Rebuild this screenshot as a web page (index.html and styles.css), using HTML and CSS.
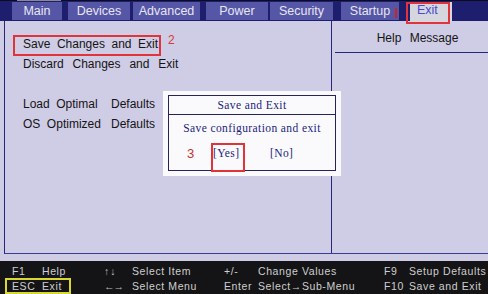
FILE: index.html
```html
<!DOCTYPE html>
<html>
<head>
<meta charset="utf-8">
<link rel="stylesheet" href="styles.css">
</head>
<body>
<div class="screen">
  <div class="topline"><span class="chip"></span></div>
  <nav class="tabs">
    <span class="tab t-main">Main</span>
    <span class="tab t-dev">Devices</span>
    <span class="tab t-adv">Advanced</span>
    <span class="tab t-pow">Power</span>
    <span class="tab t-sec">Security</span>
    <span class="tab t-start">Startup<i class="redmark"></i></span>
    <span class="tab t-exit active">Exit</span>
  </nav>
  <main class="body">
    <div class="frame">
      <section class="left">
        <div class="row">Save Changes and Exit</div>
        <div class="row wide">Discard Changes and Exit</div>
        <div class="row"></div>
        <div class="row"><span class="c1">Load Optimal</span><span>Defaults</span></div>
        <div class="row"><span class="c1">OS Optimized</span><span>Defaults</span></div>
      </section>
      <section class="right">
        <div class="help">Help Message</div>
      </section>
    </div>
  </main>
  <footer class="keys">
    <div class="kcol k1">
      <div><span class="k">F1</span><span>Help</span></div>
      <div><span class="k">ESC</span><span>Exit</span></div>
    </div>
    <div class="kcol k2">
      <div><span class="k arr">↑ ↓</span><span>Select Item</span></div>
      <div><span class="k arr">←→</span><span>Select Menu</span></div>
    </div>
    <div class="kcol k3">
      <div><span class="k">+/-</span><span>Change Values</span></div>
      <div><span class="k">Enter</span><span>Select→Sub-Menu</span></div>
    </div>
    <div class="kcol k4">
      <div><span class="k">F9</span><span>Setup Defaults</span></div>
      <div><span class="k">F10</span><span>Save and Exit</span></div>
    </div>
  </footer>

  <div class="dialog">
    <div class="dinner">
      <div class="dtitle">Save and Exit</div>
      <div class="dmsg">Save configuration and exit</div>
      <div class="dbtns"><span class="num3">3</span><span class="yes">[Yes]</span><span class="no">[No]</span></div>
    </div>
  </div>

  <div class="mark mark-save"></div>
  <span class="num num2">2</span>
  <div class="mark mark-exit"></div>
  <div class="mark-esc"></div>
</div>
</body>
</html>
```
FILE: styles.css
```css
* { box-sizing: border-box; margin: 0; padding: 0; }
html, body { width: 488px; height: 294px; overflow: hidden; }
body { font-family: "Liberation Sans", Arial, sans-serif; background: #cfcce6; }
.screen { position: relative; width: 488px; height: 294px; display: flex; flex-direction: column; }

.topline { height: 2px; background: #0c0c20; position: relative; }
.chip { position: absolute; left: 17px; top: 0; width: 44px; height: 1px; background: #8a8a90; }

.tabs { height: 20px; background: #1e1e6e; display: flex; align-items: flex-start; padding-left: 12px; }
.tab { height: 18px; margin-top: 1px; background: #5656a6; color: #e6e6f2; font-size: 12.5px; line-height: 18px; text-align: center; position: relative; }
.t-main { width: 50px; }
.t-dev { width: 62px; margin-left: 6px; }
.t-adv { width: 67px; margin-left: 3px; }
.t-pow { width: 62px; margin-left: 6px; }
.t-sec { width: 63px; margin-left: 2px; }
.t-start { width: 58px; margin-left: 8px; }
.t-exit { width: 42px; margin-left: 11px; }
.tab.active { background: #d6d6de; color: #4a4ad0; height: 20px; text-align: left; padding-left: 7px; line-height: 16px; }
.redmark { position: absolute; right: 2px; top: 6px; width: 2px; height: 10px; background: #d02020; }

.body { height: 240px; background: #cfcce6; padding: 0 0 7px 4px; }
.frame { height: 233px; border-left: 1.5px solid #26267a; border-bottom: 1.5px solid #3c3c90; display: flex; }
.left { width: 327px; border-right: 1.5px solid #26267a; padding-top: 13px; padding-left: 18px; font-size: 12px; color: #141414; word-spacing: 3.2px; }
.row { height: 20px; line-height: 20px; white-space: nowrap; }
.row.wide { word-spacing: 5.5px; }
.c1 { display: inline-block; width: 88px; }
.right { flex: 1; }
.help { margin-left: 3px; height: 32px; border-bottom: 1.5px solid #26267a; text-align: center; padding-left: 12px; padding-top: 10px; font-size: 12px; color: #141414; word-spacing: 5px; }

.keys { flex: 1; background: #141416; display: flex; padding: 3px 0 0 0; font-size: 10.5px; color: #cfcfcf; letter-spacing: 0.6px; }
.kcol div { height: 15px; line-height: 15px; white-space: nowrap; }
.kcol .k { display: inline-block; }
.k1 { width: 104px; padding-left: 12px; }
.k1 .k { width: 30px; }
.k2 { width: 120px; }
.k2 .k { width: 28px; }
.k2 .arr { font-size: 10.5px; letter-spacing: -1px; color: #bcbcbc; }
.k3 { width: 160px; }
.k3 .k { width: 34px; }
.k4 .k { width: 25px; }

.dialog { position: absolute; left: 163px; top: 91px; width: 178px; height: 85px; background: #fafafc; padding: 4px 5px 5px 5px; }
.dinner { height: 100%; border: 1.5px solid #23235e; font-family: "Liberation Serif", "Times New Roman", serif; color: #1c1c7c; font-size: 11.5px; letter-spacing: 0.4px; }
.dtitle { height: 19px; line-height: 18px; text-align: center; border-bottom: 1.5px solid #23235e; }
.dmsg { text-align: center; height: 25px; line-height: 27px; }
.dbtns { position: relative; height: 28px; }
.num3 { position: absolute; left: 18px; top: 6px; color: #c83030; font-family: "Liberation Sans", sans-serif; font-size: 13px; }
.yes { position: absolute; left: 44px; top: 7px; }
.no { position: absolute; left: 101px; top: 7px; }

.mark { position: absolute; border: 2px solid #e0343a; }
.mark-save { left: 13px; top: 35px; width: 148px; height: 21px; }
.num { position: absolute; color: #d83838; font-size: 12px; }
.num2 { left: 168px; top: 33px; }
.mark-exit { left: 406px; top: 2px; width: 44px; height: 22px; }
.yes::after { content: ""; position: absolute; left: -2px; top: -4px; width: 30px; height: 25px; border: 2px solid #e0343a; }
.mark-esc { position: absolute; left: 5px; top: 278px; width: 66px; height: 16px; border: 2px solid #d8d830; }
```
